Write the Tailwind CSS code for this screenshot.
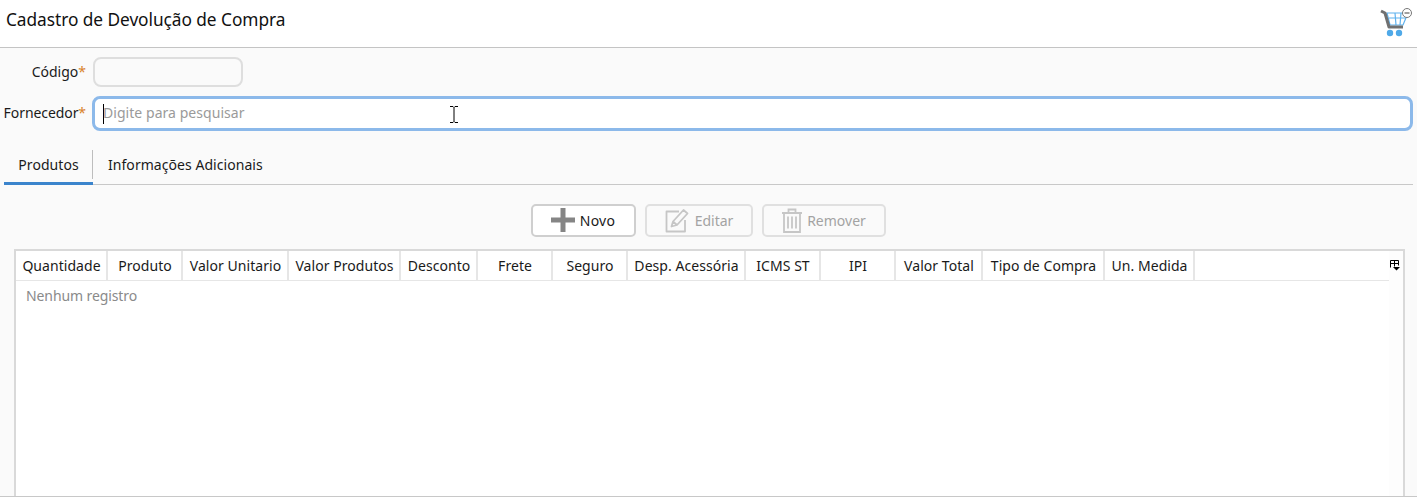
<!DOCTYPE html>
<html><head><meta charset="utf-8"><script src="https://cdn.jsdelivr.net/npm/@tailwindcss/browser@4"></script></head>
<body class="m-0 overflow-hidden">
<div class="w-[1417px] h-[497px] flex flex-col bg-[#fafafa] font-['Noto_Sans',sans-serif] text-[#1a1a1a] overflow-hidden border-b border-[#c8c8c8]">
  <header class="h-[48px] shrink-0 bg-white border-b border-[#c4c4c4] flex items-center justify-between pl-[6px] pr-[4px] pb-[7px]">
    <h1 class="text-[17.3px] font-normal tracking-[-0.05px] text-[#111]">Cadastro de Devolução de Compra</h1>
    <svg class="w-[33px] h-[29px] mt-[4px]" viewBox="0 0 33 29" fill="none">
      <path d="M7 5H28L23 17H10z M9 10H26 M15 5L16 17 M21 5L20 17" stroke="#5fb2ee" stroke-width="1.2"/>
      <path d="M1 3L5 5L9 19H23" stroke="#707070" stroke-width="3" stroke-linejoin="round"/>
      <circle cx="10" cy="25" r="3.2" fill="#4fa9e8"/><circle cx="19" cy="25" r="3.2" fill="#4fa9e8"/>
      <circle cx="27" cy="5" r="4.5" fill="#fff" stroke="#777"/><path d="M24.500 5h5" stroke="#777" stroke-width="1.4"/>
    </svg>
  </header>
  <section class="flex flex-col pr-[4px] pt-[9px]">
    <div class="flex items-center h-[30px]">
      <label class="w-[86px] text-right text-[14px] whitespace-nowrap pb-[2px]">Código<span class="text-[#d9822b]">*</span></label>
      <input class="ml-[7px] w-[150px] h-[30px] rounded-[8px] border-2 border-[#dedede] bg-[#fafafa] outline-none" disabled>
    </div>
    <div class="flex items-center h-[35px] mt-[9px]">
      <label class="w-[86px] text-right text-[14px] tracking-[-0.08px] whitespace-nowrap pb-[2px]">Fornecedor<span class="text-[#d9822b]">*</span></label>
      <div class="ml-[6px] flex-1 h-[35px] rounded-[8px] border-[3px] border-[#8cb9ea] bg-white flex items-center pl-[8px] relative">
        <span class="w-px h-[20px] bg-black"></span>
        <span class="text-[14px] text-[#9a9a9a] pb-[2px] -ml-px tracking-[0.05px]">Digite para pesquisar</span>
        <svg class="absolute left-[355px] top-[7px] w-[8px] h-[17px]" viewBox="0 0 8 17" fill="none" stroke="#000"><path d="M0 .5h3l1 1 1-1h3M4 1.500v14M0 16.500h3l1-1 1 1h3"/></svg>
      </div>
    </div>
  </section>
  <nav class="h-[35px] mt-[19px] mx-[4px] shrink-0 border-b border-[#c8c8c8] flex relative text-[14px] tracking-[0.05px]">
    <span class="w-[89px] h-[35px] flex items-center justify-center border-b-[3px] border-[#3b84cc] pb-[4px]">Produtos</span>
    <span class="w-px h-[29px] bg-[#bdbdbd] -ml-px"></span>
    <span class="ml-[15px] h-[28px] flex items-center">Informações Adicionais</span>
  </nav>
  <div class="flex justify-center gap-[9px] mt-[19px] h-[33px] shrink-0 text-[14px]">
    <button class="w-[105px] rounded-[5px] border-2 border-[#cfcfcf] bg-white flex items-center justify-center gap-[5px] pb-[1px] pr-[1px]">
      <svg class="w-[24px] h-[24px]" viewBox="0 0 24 24"><path d="M9.500 0h5v9.500H24v5h-9.500V24h-5v-9.500H0v-5h9.500z" fill="#858585"/></svg><span class="tracking-[0.3px]">Novo</span>
    </button>
    <button class="w-[108px] rounded-[5px] border-2 border-[#e0e0e0] flex items-center justify-center gap-[5px] pb-[1px] text-[#a3a3a3]">
      <svg class="w-[25px] h-[25px]" viewBox="0 0 25 25" fill="none" stroke="#c6c6c6" stroke-width="1.8" stroke-linejoin="round"><path d="M20 12v11.500H1.500V3.500H14"/><path d="M6.500 18.500l1.500-5L18.500 2l4 3.500L12 17z M8 13.500L12 17"/></svg>Editar
    </button>
    <button class="w-[124px] rounded-[5px] border-2 border-[#e0e0e0] flex items-center justify-center gap-[5px] pb-[1px] text-[#a3a3a3]">
      <svg class="w-[20px] h-[25px]" viewBox="0 0 20 25" fill="none" stroke="#c6c6c6" stroke-width="1.8"><path d="M0 5h20M2 5v19h16V5M6.500 5V1.500h7V5M6 8.500v12M10 8.500v12M14 8.500v12"/></svg>Remover
    </button>
  </div>
  <div class="mt-[12px] mx-[14px] w-[1391px] flex-1 border-2 border-[#d9d9d9] border-b-0 bg-white relative">
    <div class="absolute right-0 top-0 bottom-0 w-[14px] bg-[#fdfdfd]"></div>
    <div class="h-[30px] w-[1373px] flex border-b border-[#e6e6e6] text-[14px] tracking-[0.05px]">
      <span class="w-[92px] pl-[1px] pb-[1px] flex items-center justify-center border-r-2 border-[#e6e6e6] whitespace-nowrap">Quantidade</span>
      <span class="w-[75px] pl-[1px] pb-[1px] flex items-center justify-center border-r-2 border-[#e6e6e6] whitespace-nowrap">Produto</span>
      <span class="w-[106px] pl-[1px] pb-[1px] flex items-center justify-center border-r-2 border-[#e6e6e6] whitespace-nowrap">Valor Unitario</span>
      <span class="w-[112px] pl-[1px] pb-[1px] flex items-center justify-center border-r-2 border-[#e6e6e6] whitespace-nowrap">Valor Produtos</span>
      <span class="w-[77px] pl-[1px] pb-[1px] flex items-center justify-center border-r-2 border-[#e6e6e6] whitespace-nowrap">Desconto</span>
      <span class="w-[75px] pl-[1px] pb-[1px] flex items-center justify-center border-r-2 border-[#e6e6e6] whitespace-nowrap">Frete</span>
      <span class="w-[75px] pl-[1px] pb-[1px] flex items-center justify-center border-r-2 border-[#e6e6e6] whitespace-nowrap">Seguro</span>
      <span class="w-[118px] pl-[1px] pb-[1px] flex items-center justify-center border-r-2 border-[#e6e6e6] whitespace-nowrap">Desp. Acessória</span>
      <span class="w-[75px] pl-[1px] pb-[1px] flex items-center justify-center border-r-2 border-[#e6e6e6] whitespace-nowrap">ICMS ST</span>
      <span class="w-[75px] pl-[1px] pb-[1px] flex items-center justify-center border-r-2 border-[#e6e6e6] whitespace-nowrap">IPI</span>
      <span class="w-[87px] pl-[1px] pb-[1px] flex items-center justify-center border-r-2 border-[#e6e6e6] whitespace-nowrap">Valor Total</span>
      <span class="w-[122px] pl-[1px] pb-[1px] flex items-center justify-center border-r-2 border-[#e6e6e6] whitespace-nowrap">Tipo de Compra</span>
      <span class="w-[90px] pl-[1px] pb-[1px] flex items-center justify-center border-r-2 border-[#e6e6e6] whitespace-nowrap">Un. Medida</span>
    </div>
    <div class="pl-[10px] pt-[4px] text-[14px] tracking-[-0.1px] text-[#8a8a8a]">Nenhum registro</div>
    <svg class="absolute right-[3px] top-[9px] w-[10px] h-[11px]" viewBox="0 0 10 11" fill="none" stroke="#000"><path d="M.5 7.500v-7h8v5M.5 3.500h8M4.500.5v6"/><path d="M3 7h7l-3.500 3.500z" fill="#000" stroke="none"/></svg>
  </div>
</div>
</body></html>
